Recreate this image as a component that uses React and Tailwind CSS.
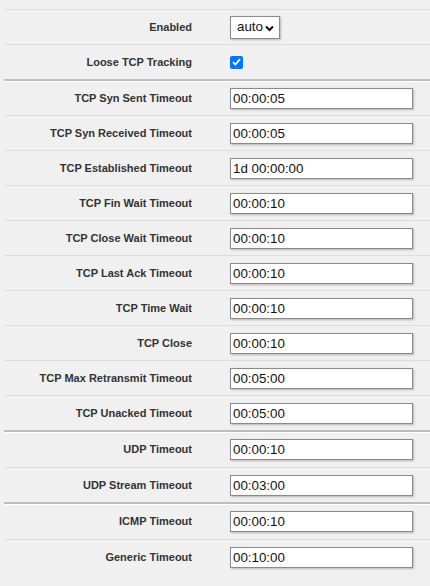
import React from 'react';

const sections = [
  [
    { label: 'Enabled', type: 'select', value: 'auto' },
    { label: 'Loose TCP Tracking', type: 'checkbox' },
  ],
  [
    { label: 'TCP Syn Sent Timeout', value: '00:00:05' },
    { label: 'TCP Syn Received Timeout', value: '00:00:05' },
    { label: 'TCP Established Timeout', value: '1d 00:00:00' },
    { label: 'TCP Fin Wait Timeout', value: '00:00:10' },
    { label: 'TCP Close Wait Timeout', value: '00:00:10' },
    { label: 'TCP Last Ack Timeout', value: '00:00:10' },
    { label: 'TCP Time Wait', value: '00:00:10' },
    { label: 'TCP Close', value: '00:00:10' },
    { label: 'TCP Max Retransmit Timeout', value: '00:05:00' },
    { label: 'TCP Unacked Timeout', value: '00:05:00' },
  ],
  [
    { label: 'UDP Timeout', value: '00:00:10' },
    { label: 'UDP Stream Timeout', value: '00:03:00' },
  ],
  [
    { label: 'ICMP Timeout', value: '00:00:10' },
    { label: 'Generic Timeout', value: '00:10:00' },
  ],
];

function Field({ item }) {
  if (item.type === 'select') {
    return (
      <div className="relative flex h-[23px] w-[50px] items-center border border-[#8a8a8a] bg-white pl-[6px] shadow-[1px_1px_2px_rgba(0,0,0,0.25)]">
        <span className="text-[13.33px] text-[#111]">{item.value}</span>
        <svg className="absolute right-[5px] top-[8px]" width="9" height="7" viewBox="0 0 9 7">
          <path d="M1 1.5 L4.5 5 L8 1.5" fill="none" stroke="#111" strokeWidth="2" />
        </svg>
      </div>
    );
  }

  if (item.type === 'checkbox') {
    return (
      <div className="flex h-[13px] w-[13px] items-center justify-center rounded-[2px] bg-[#0075ff]">
        <svg width="9" height="8" viewBox="0 0 9 8">
          <path d="M1 4.2 L3.4 6.5 L8 1.2" fill="none" stroke="#fff" strokeWidth="1.8" />
        </svg>
      </div>
    );
  }

  return (
    <input
      readOnly
      value={item.value}
      className="h-[21px] w-[183px] border border-[#8a8a8a] bg-white px-[2px] text-[13.33px] text-[#111] shadow-[1px_1px_2px_rgba(0,0,0,0.25)] outline-none"
    />
  );
}

export default function App() {
  return (
    <div className="min-h-[586px] bg-[#f0f0f0] pl-[4px] pt-[9px] font-['Liberation_Sans',Arial,sans-serif]">
      {sections.map((rows, si) =>
        rows.map((item, ri) => (
          <div
            key={`${si}-${ri}`}
            className={`flex items-center ${
              ri === 0 && si > 0
                ? `${si === 1 ? 'h-[36px]' : 'h-[37px]'} border-t-2 border-t-[#bdbdbd] shadow-[inset_0_1px_0_#fff]`
                : 'h-[35px] border-t border-t-[#dcdcdc]'
            }`}
          >
            <div className="w-[188px] text-right text-[11px] font-bold text-[#333]">{item.label}</div>
            <div className="ml-[38px] flex items-center">
              <Field item={item} />
            </div>
          </div>
        )),
      )}
    </div>
  );
}
